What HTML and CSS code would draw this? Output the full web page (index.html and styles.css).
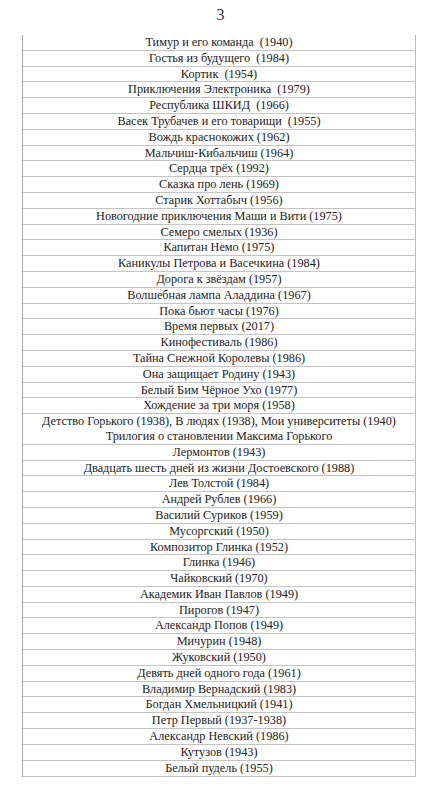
FILE: index.html
```html
<!DOCTYPE html>
<html lang="ru">
<head>
    <meta charset="UTF-8">
    <meta name="viewport" content="width=device-width, initial-scale=1.0">
    <title>3</title>
    <link rel="stylesheet" href="styles.css">
</head>
<body>
    <div class="page-num">3</div>
    <div class="film-list">
        <div class="row">Тимур и его команда&nbsp; (1940)</div>
        <div class="row">Гостья из будущего&nbsp; (1984)</div>
        <div class="row">Кортик&nbsp; (1954)</div>
        <div class="row">Приключения Электроника&nbsp; (1979)</div>
        <div class="row">Республика ШКИД&nbsp; (1966)</div>
        <div class="row">Васек Трубачев и его товарищи&nbsp; (1955)</div>
        <div class="row">Вождь краснокожих (1962)</div>
        <div class="row">Мальчиш-Кибальчиш (1964)</div>
        <div class="row">Сердца трёх (1992)</div>
        <div class="row">Сказка про лень (1969)</div>
        <div class="row">Старик Хоттабыч (1956)</div>
        <div class="row">Новогодние приключения Маши и Вити (1975)</div>
        <div class="row">Семеро смелых (1936)</div>
        <div class="row">Капитан Немо (1975)</div>
        <div class="row">Каникулы Петрова и Васечкина (1984)</div>
        <div class="row">Дорога к звёздам (1957)</div>
        <div class="row">Волшебная лампа Аладдина (1967)</div>
        <div class="row">Пока бьют часы (1976)</div>
        <div class="row">Время первых (2017)</div>
        <div class="row">Кинофестиваль (1986)</div>
        <div class="row">Тайна Снежной Королевы (1986)</div>
        <div class="row">Она защищает Родину (1943)</div>
        <div class="row">Белый Бим Чёрное Ухо (1977)</div>
        <div class="row">Хождение за три моря (1958)</div>
        <div class="row">Детство Горького (1938), В людях (1938), Мои университеты (1940)<br>Трилогия о становлении Максима Горького</div>
        <div class="row">Лермонтов (1943)</div>
        <div class="row">Двадцать шесть дней из жизни Достоевского (1988)</div>
        <div class="row">Лев Толстой (1984)</div>
        <div class="row">Андрей Рублев (1966)</div>
        <div class="row">Василий Суриков (1959)</div>
        <div class="row">Мусоргский (1950)</div>
        <div class="row">Композитор Глинка (1952)</div>
        <div class="row">Глинка (1946)</div>
        <div class="row">Чайковский (1970)</div>
        <div class="row">Академик Иван Павлов (1949)</div>
        <div class="row">Пирогов (1947)</div>
        <div class="row">Александр Попов (1949)</div>
        <div class="row">Мичурин (1948)</div>
        <div class="row">Жуковский (1950)</div>
        <div class="row">Девять дней одного года (1961)</div>
        <div class="row">Владимир Вернадский (1983)</div>
        <div class="row">Богдан Хмельницкий (1941)</div>
        <div class="row">Петр Первый (1937-1938)</div>
        <div class="row">Александр Невский (1986)</div>
        <div class="row">Кутузов (1943)</div>
        <div class="row">Белый пудель (1955)</div>
    </div>
</body>
</html>
```

FILE: styles.css
```css
body {
    margin: 0;
    padding: 0;
    background: #fff;
    color: #222;
    font-family: "Liberation Serif", "Times New Roman", serif;
}
.page-num {
    padding: 5px 0 10px;
    font-size: 16px;
    line-height: 20px;
    text-align: center;
    color: #333;
}
.film-list {
    margin: 0 25px 0 22px;
    border-left: 1px solid #a8a8a8;
    border-right: 1px solid #bbb;
}
.row {
    font-size: 12.25px;
    line-height: 14.8px;
    text-align: center;
    border-bottom: 1px solid #c4c4c4;
    white-space: nowrap;
}
.row:last-child {
    padding-bottom: 1px;
}
```
